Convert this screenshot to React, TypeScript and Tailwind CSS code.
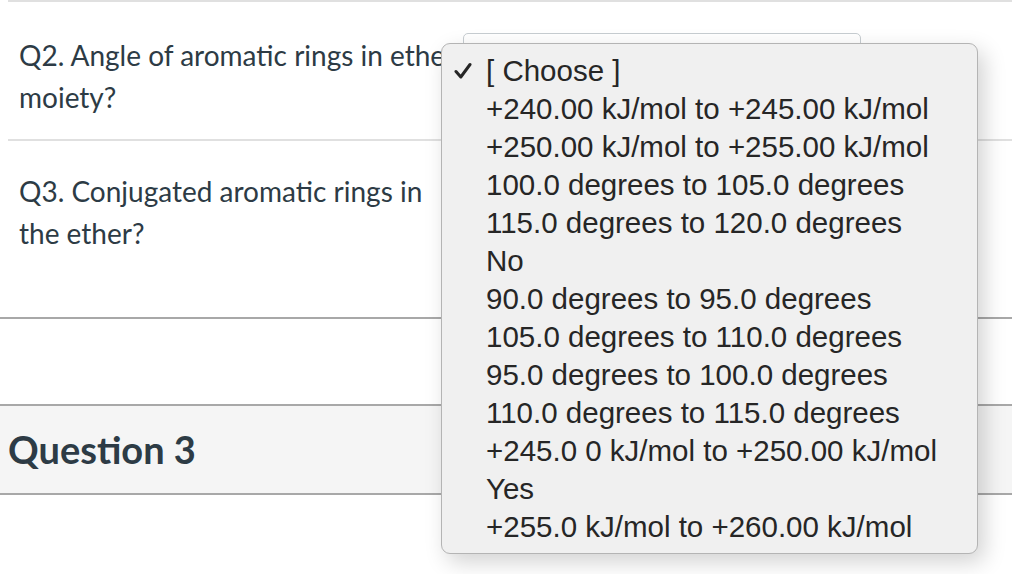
import React from "react";

const options = [
  "[ Choose ]",
  "+240.00 kJ/mol to +245.00 kJ/mol",
  "+250.00 kJ/mol to +255.00 kJ/mol",
  "100.0 degrees to 105.0 degrees",
  "115.0 degrees to 120.0 degrees",
  "No",
  "90.0 degrees to 95.0 degrees",
  "105.0 degrees to 110.0 degrees",
  "95.0 degrees to 100.0 degrees",
  "110.0 degrees to 115.0 degrees",
  "+245.0 0 kJ/mol to +250.00 kJ/mol",
  "Yes",
  "+255.0 kJ/mol to +260.00 kJ/mol",
];

function Check() {
  return (
    <svg viewBox="0 0 18 18" className="w-[18px] h-[18px]">
      <path d="M2 9.5 L6.8 15 L16 2.5" fill="none" stroke="#262626" strokeWidth="3" strokeLinecap="round" strokeLinejoin="round" />
    </svg>
  );
}

export default function App() {
  return (
    <div className="relative w-[1012px] h-[574px] overflow-hidden bg-white text-[#2d3b45] font-['Lato',sans-serif]">
      {/* answer rows */}
      <div className="ml-[8px] border-t-2 border-[#e0e0e0]">
        <div className="h-[137px] flex">
          <div className="w-[455px] shrink-0 pl-[11px] pt-[32px] text-[28px] leading-[42px]">
            Q2. Angle of aromatic rings in ether moiety?
          </div>
          <div className="pt-[31px]">
            <div className="w-[398px] h-[40px] rounded-[5px] border border-[#c7cdd1] bg-white" />
          </div>
        </div>
        <div className="h-[178px] flex border-t-2 border-[#e0e0e0]">
          <div className="w-[455px] shrink-0 pl-[11px] pt-[29px] text-[28px] leading-[42px]">
            Q3. Conjugated aromatic rings in the ether?
          </div>
        </div>
      </div>
      <div className="border-t-2 border-[#a8a8a8] h-[87px]" />
      <div className="h-[91px] bg-[#f5f5f5] border-y-2 border-[#a8a8a8] flex items-center pl-[8px]">
        <h2 className="text-[38px] font-bold text-[#2d3b45]">Question 3</h2>
      </div>

      {/* open select menu */}
      <div className="absolute left-[441px] top-[43px] w-[537px] h-[511px] rounded-[9px] bg-[#f0f0f0] border border-[#b4b4b4] shadow-[6px_8px_22px_rgba(0,0,0,0.18)] pt-[8px] font-['Liberation_Sans',Arial,sans-serif] text-[#262626]">
        {options.map((o, i) => (
          <div key={o} className="h-[38px] flex items-center">
            <div className="w-[44px] flex pl-[12px]">{i === 0 && <Check />}</div>
            <span className="text-[29.5px] leading-none whitespace-nowrap">{o}</span>
          </div>
        ))}
      </div>
    </div>
  );
}
